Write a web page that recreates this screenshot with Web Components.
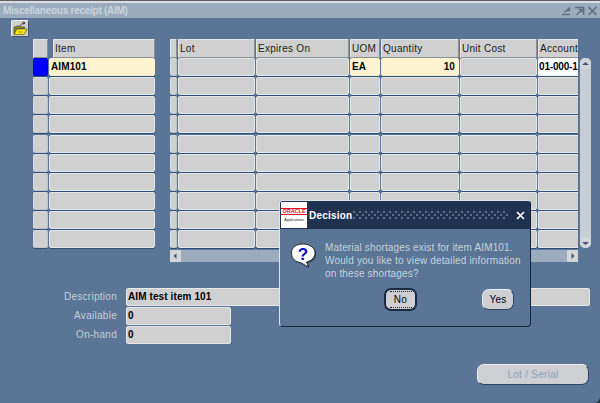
<!DOCTYPE html>
<html>
<head>
<meta charset="utf-8">
<title>Miscellaneous receipt (AIM)</title>
<style>
  html, body { margin: 0; height: 100%; background: #26364a; overflow: hidden; }
  body { font: 10px "Liberation Sans", Arial, sans-serif; }
</style>
</head>
<body>
<ora-window title="Miscellaneous receipt (AIM)">
  <ora-toolbar slot="toolbar"></ora-toolbar>
  <ora-multirow slot="left" columns="15 106" headers=",Item" header-inset="0,4"
    first='[{"kind":"current"},{"text":"AIM101","kind":"active"}]'></ora-multirow>
  <ora-multirow slot="right" columns="7 77 93 30 78 77 40" headers=",Lot,Expires On,UOM,Quantity,Unit Cost,Account" clip-last
    first='[{},{},{},{"text":"EA","kind":"active"},{"text":"10","kind":"active","align":"right"},{},{"text":"01-000-1","kind":"white"}]'></ora-multirow>
  <ora-scrollbar slot="hbar" orient="h"></ora-scrollbar>
  <ora-scrollbar slot="vbar" orient="v"></ora-scrollbar>
  <ora-field slot="fields" label="Description" value="AIM test item 101" wide></ora-field>
  <ora-field slot="fields" label="Available" value="0"></ora-field>
  <ora-field slot="fields" label="On-hand" value="0"></ora-field>
  <ora-button slot="actions" disabled style="width:112px;height:21px">Lot / Serial</ora-button>
  <ora-dialog slot="overlay" heading="Decision">
    Material shortages exist for item AIM101.<br>
    Would you like to view detailed information<br>
    on these shortages?
  </ora-dialog>
</ora-window>

<script>
(() => {
  function shadow(el, html) {
    el.attachShadow({ mode: "open" }).innerHTML = html;
    return el.shadowRoot;
  }

  class OraWindow extends HTMLElement {
    connectedCallback() {
      if (this.shadowRoot) return;
      shadow(this, `
        <style>
          :host {
            display: flex; flex-direction: column; position: relative;
            box-sizing: border-box; width: 600px; height: 403px;
            background: #5a7596; border-top: 1px solid #5c6066;
            border-radius: 0 0 6px 0; overflow: hidden;
            font: 10px "Liberation Sans", Arial, sans-serif;
          }
          .edge { height: 2px; background: #d9dfe5; }
          .title {
            height: 15px; line-height: 15px; padding-left: 3px;
            background: #9aacbd; color: #c9d4de; font-weight: bold; font-size: 10px; letter-spacing: -.26px;
            display: flex; justify-content: space-between; align-items: center;
          }
          .ctrls { display: flex; gap: 2px; margin-right: 2px; }
          .ctrls svg { display: block; }
          .tool { padding: 2px 0 0 11px; height: 17px; }
          .tables { display: flex; margin-top: 2px; padding-left: 33px; }
          .left { width: 122px; margin-right: 15px; flex: none; }
          .right { width: 408px; flex: none; margin-right: 2px; }
          .vbar { width: 11px; margin-top: 19px; height: 190px; display: flex; }
          .hbar { margin-top: 2px; height: 12px; display: flex; }
          .fields { display: grid; gap: 2px; margin-top: 26px; padding-left: 33px; }
          .actions { display: flex; justify-content: flex-end; margin-top: 21px; padding-right: 11px; }
        </style>
        <div class="edge"></div>
        <div class="title"><span>${this.getAttribute("title") || ""}</span>
          <span class="ctrls">
            <svg width="11" height="10" viewBox="0 0 11 10" fill="none" stroke="#5d6f80" stroke-width="1.4"><path d="M1 8.500h8M3.500 6.500 8.500 1.500M5.500 4.500h3v-3"/></svg>
            <svg width="11" height="10" viewBox="0 0 11 10" fill="none" stroke="#5d6f80" stroke-width="1.4"><path d="M1 1.500h9M2.500 9 8 3.500M4.500 3.500H8V7M9.700 1v8"/></svg>
            <svg width="11" height="10" viewBox="0 0 11 10" fill="none" stroke="#5d6f80" stroke-width="1.7"><path d="M1.500 1 9.500 9M9.500 1 1.500 9"/></svg>
          </span>
        </div>
        <div class="tool"><slot name="toolbar"></slot></div>
        <div class="tables">
          <div class="left"><slot name="left"></slot></div>
          <div class="right"><slot name="right"></slot><div class="hbar"><slot name="hbar"></slot></div></div>
          <div class="vbar"><slot name="vbar"></slot></div>
        </div>
        <div class="fields"><slot name="fields"></slot></div>
        <div class="actions"><slot name="actions"></slot></div>
        <slot name="overlay"></slot>
      `);
    }
  }

  class OraToolbar extends HTMLElement {
    connectedCallback() {
      if (this.shadowRoot) return;
      shadow(this, `
        <style>
          :host {
            display: block; box-sizing: border-box; width: 18px; height: 17px;
            background: #d0d0d0; border-radius: 2px;
            border: 1px solid; border-color: #eef0f2 #3d4f66 #3d4f66 #eef0f2;
          }
          svg { display: block; margin: 0; }
        </style>
        <svg width="16" height="15" viewBox="0 0 16 15">
          <path d="M9 4.500C9 2.500 10.500 2 12.500 2M11 .7 13 2 11 3.400" fill="none" stroke="#333" stroke-width="1"/>
          <path d="M2 13V6h1.500l1-1h4l1 1h3v1.500H5L2.500 13z" fill="#8a8a20" stroke="#444" stroke-width=".7"/>
          <path d="M2 13.500 5 8h10l-3 5.500z" fill="#ffee00" stroke="#5a5a10" stroke-width=".7"/>
          <path d="M6 11h5" stroke="#8f8a10" stroke-width="1"/>
        </svg>
      `);
    }
  }

  class OraMultirow extends HTMLElement {
    connectedCallback() {
      if (this.shadowRoot) return;
      const widths = this.getAttribute("columns").split(" ").map(Number);
      const headers = this.getAttribute("headers").split(",");
      const insets = (this.getAttribute("header-inset") || "").split(",").map(Number);
      const first = JSON.parse(this.getAttribute("first") || "[]");
      const clipLast = this.hasAttribute("clip-last");

      let cells = headers.map((h, i) =>
        `<div class="hd${clipLast && i === widths.length - 1 ? " open" : ""}" style="margin-left:${insets[i] || 0}px">${h}</div>`
      ).join("");

      for (let r = 0; r < 10; r++) {
        widths.forEach((w, c) => {
          const data = (r === 0 && first[c]) || {};
          const cls = ["cell", data.kind || "", w < 16 ? "narrow" : "", clipLast && c === widths.length - 1 ? "open" : ""].join(" ");
          cells += `<div class="${cls}" style="text-align:${data.align || "left"}">${data.text || ""}</div>`;
        });
      }

      shadow(this, `
        <style>
          :host { display: block; }
          .grid {
            display: grid; grid-template-columns: ${widths.map((w) => w + "px").join(" ")};
            column-gap: 1px; row-gap: 1.12px; grid-template-rows: 18px; grid-auto-rows: 18px;
          }
          .hd {
            box-sizing: border-box; height: 19px; line-height: 17px; padding-left: 1px;
            background: #d0d0d0; color: #1a1a1a; white-space: nowrap; overflow: hidden;
            border: 1px solid; border-color: #e4e6e8 #8b8f94 #8b8f94 #e4e6e8;
            letter-spacing: .28px;
          }
          .hd.open { border-right: 0; }
          .cell {
            box-sizing: border-box; height: 18px; line-height: 16px; padding: 0 3px 0 1px;
            background: #d0d0d0; color: #000; font-weight: bold; white-space: nowrap; overflow: hidden;
            border: 1px solid #e6e9ec; border-radius: 2px; letter-spacing: .1px;
            box-shadow: 0 1px 0 #2f4f78;
          }
          .cell.narrow { border-color: #d8dadd #c2c6ca #c2c6ca #d8dadd; }
          .cell.open { border-right: 0; border-radius: 2px 0 0 2px; padding-right: 0; }
          .cell.active { background: #fdf3d0; border-color: #fdf3d0; }
          .cell.white { background: #fff; border-color: #fff; padding-left: 0; letter-spacing: -.18px; }
          .cell.current { background: #0000ff; border-color: #0000e0; }
        </style>
        <div class="grid">${cells}</div>
      `);
    }
  }

  class OraScrollbar extends HTMLElement {
    connectedCallback() {
      if (this.shadowRoot) return;
      const horizontal = this.getAttribute("orient") === "h";
      const arrows = horizontal
        ? ['<path d="M5.500 3 2.500 6 5.500 9z"/>', '<path d="M3.500 3 6.500 6 3.500 9z"/>']
        : ['<path d="M2 6 5.500 3 9 6z"/>', '<path d="M2 4 5.500 7 9 4z"/>'];
      shadow(this, `
        <style>
          :host {
            display: flex; flex: 1; justify-content: space-between;
            flex-direction: ${horizontal ? "row" : "column"};
            background: ${horizontal ? "#9aacbd" : "#c9ced3"};
            border-radius: ${horizontal ? "0" : "5px"};
          }
          .btn {
            background: #d4d6d9; width: 11px; height: ${horizontal ? "12px" : "11px"};
            border-radius: ${horizontal ? "0" : "5px"}; display: flex; align-items: center; justify-content: center;
          }
          svg { display: block; fill: #3e5a7c; }
        </style>
        <div class="btn"><svg width="${horizontal ? 9 : 11}" height="${horizontal ? 12 : 10}">${arrows[0]}</svg></div>
        <div class="btn"><svg width="${horizontal ? 9 : 11}" height="${horizontal ? 12 : 10}">${arrows[1]}</svg></div>
      `);
    }
  }

  class OraField extends HTMLElement {
    connectedCallback() {
      if (this.shadowRoot) return;
      const wide = this.hasAttribute("wide");
      shadow(this, `
        <style>
          :host { display: flex; align-items: center; height: 17px; }
          label { width: 84px; margin-right: 9px; text-align: right; color: #c6d0da; letter-spacing: .28px; flex: none; }
          .box {
            box-sizing: border-box; height: 18px; line-height: 16px; padding-left: 1px;
            width: ${wide ? "464px" : "105px"};
            background: #d0d0d0; color: #000; font-weight: bold; letter-spacing: .1px;
            border: 1px solid #e6e9ec; border-radius: 2px;
          }
        </style>
        <label>${this.getAttribute("label")}</label>
        <div class="box">${this.getAttribute("value")}</div>
      `);
    }
  }

  class OraButton extends HTMLElement {
    connectedCallback() {
      if (this.shadowRoot) return;
      shadow(this, `
        <style>
          :host {
            display: flex; align-items: center; justify-content: center; box-sizing: border-box;
            background: #cdcfd2; color: #000; border-radius: 7px; letter-spacing: .28px;
            border: 1px solid; border-color: #eceef0 #2f4463 #2f4463 #eceef0;
          }
          :host([disabled]) { color: #8ea2b8; }
          :host([focused]) { border: 2px solid #1b2a40; }
          :host([focused]) .t { border-top: 1px dotted #222; border-bottom: 1px dotted #222; padding: 2px 0; width: 22px; text-align: center; }
        </style>
        <span class="t"><slot></slot></span>
      `);
    }
  }

  class OraDialog extends HTMLElement {
    connectedCallback() {
      if (this.shadowRoot) return;
      shadow(this, `
        <style>
          :host {
            position: absolute; left: 279px; top: 199px; width: 252px; height: 127px;
            box-sizing: border-box; background: #5a7596; border-radius: 4px;
            border: 1px solid; border-color: #dfe4e9 #16243a #16243a #dfe4e9;
            display: flex; flex-direction: column; overflow: hidden;
            font: 10px "Liberation Sans", Arial, sans-serif;
          }
          .bar {
            height: 28px; flex: none; background: #1f3350; display: flex; align-items: center;
            padding-left: 1px; color: #fff; font-weight: bold;
          }
          .logo {
            width: 26px; height: 26px; background: #fff; flex: none; margin-right: 2px;
            display: flex; flex-direction: column; align-items: center; justify-content: center;
            line-height: 1;
          }
          .logo b { font-size: 5.500px; color: #e0102a; letter-spacing: 0; border-top: 1px solid #e0102a; border-bottom: 1px solid #e0102a; width: 100%; text-align: center; }
          .logo i { font: normal 3.600px "Liberation Sans", Arial, sans-serif; color: #222; margin-top: 3px; white-space: nowrap; }
          .name { width: 44px; letter-spacing: .2px; flex: none; }
          .dots {
            width: 156px; height: 9px; flex: none;
            background-color: #1f3350;
            background-image: radial-gradient(circle at 1px 1px, #5d7086 .7px, transparent 1px),
                              radial-gradient(circle at 1px 1px, #5d7086 .7px, transparent 1px);
            background-size: 6px 6px; background-position: 0 0, 3px 3px;
          }
          .close { margin-left: 7px; }
          .body { display: flex; padding: 13px 0 0 10px; }
          .body svg { flex: none; margin-right: 8px; }
          .msg { color: #c8d2dc; line-height: 13px; letter-spacing: .16px; white-space: nowrap; margin-top: -1px; }
          .btns { display: flex; margin-top: 8px; padding-left: 104px; align-items: center; }
          .gap { width: 65px; }
        </style>
        <div class="bar">
          <div class="logo"><b>ORACLE</b><i>Applications</i></div>
          <div class="name">${this.getAttribute("heading")}</div>
          <div class="dots"></div>
          <svg class="close" width="9" height="9" viewBox="0 0 9 9" fill="none" stroke="#fff" stroke-width="1.7"><path d="M1 1 8 8M8 1 1 8"/></svg>
        </div>
        <div class="body">
          <svg width="27" height="27" viewBox="0 0 27 27">
            <path d="M13 2C6 2 1.500 5.500 1.500 11s4 9 9 9.500l8 4.500-2-5c5-1 8.500-4.500 8.500-9C25 5.500 19 2 13 2z" fill="#26364a" transform="translate(1 1)"/>
            <path d="M13 2C6 2 1.500 5.500 1.500 11s4 9 9 9.500l8 4.500-2-5c5-1 8.500-4.500 8.500-9C25 5.500 19 2 13 2z" fill="#fff" stroke="#111" stroke-width=".8"/>
            <text x="13" y="17.500" text-anchor="middle" font-family="Liberation Sans, Arial, sans-serif" font-size="17" font-weight="bold" fill="#0a0ad8">?</text>
          </svg>
          <div class="msg"><slot></slot></div>
        </div>
        <div class="btns">
          <ora-button focused style="width:33px;height:23px">No</ora-button>
          <span class="gap"></span>
          <ora-button style="width:32px;height:21px">Yes</ora-button>
        </div>
      `);
    }
  }

  customElements.define("ora-window", OraWindow);
  customElements.define("ora-toolbar", OraToolbar);
  customElements.define("ora-multirow", OraMultirow);
  customElements.define("ora-scrollbar", OraScrollbar);
  customElements.define("ora-field", OraField);
  customElements.define("ora-button", OraButton);
  customElements.define("ora-dialog", OraDialog);
})();
</script>
</body>
</html>
